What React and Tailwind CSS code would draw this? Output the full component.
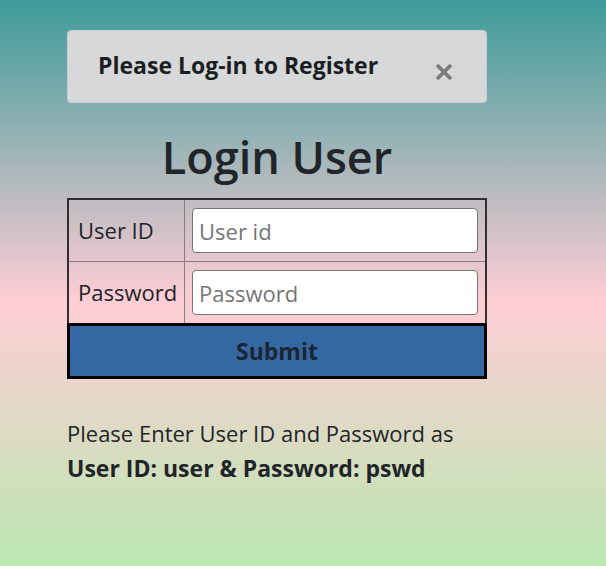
export default function App() {
  return (
    <div
      className="min-h-[566px] w-full bg-[linear-gradient(to_bottom,#3e9c9a_0%,#fecdd5_53%,#bbe8b1_100%)] text-[#212529]"
      style={{ fontFamily: '"Open Sans", "Noto Sans", sans-serif' }}
    >
      <div className="w-[420px] ml-[67px] pt-[30px]">
        <div className="relative h-[73px] rounded-[4px] border border-[#c8cacd] bg-[#d7d8da] flex items-center pl-[30px]">
          <span className="text-[23px] font-bold text-[#1b1e21] -mt-[2px]">Please Log-in to Register</span>
          <svg
            className="absolute left-[367px] top-[32px]"
            width="18"
            height="18"
            viewBox="0 0 18 18"
          >
            <path d="M2 2 L16 16 M16 2 L2 16" stroke="#7a7a7a" strokeWidth="3.6" strokeLinecap="butt" />
          </svg>
        </div>

        <h1 className="mt-[24px] text-center text-[45px] font-semibold leading-[60px]">Login User</h1>

        <div className="mt-[11px] border-2 border-[#303030]">
          <div className="flex h-[62px] border-b border-[#808080]">
            <div className="w-[116px] border-r border-[#808080] flex items-center pl-[9px] text-[22px]">User ID</div>
            <div className="flex-1 flex items-center px-[7px]">
              <input
                className="w-full h-[45px] rounded-[4px] border border-[#767676] bg-white px-[6px] text-[22px] placeholder:text-[#757575] outline-none"
                placeholder="User id"
              />
            </div>
          </div>
          <div className="flex h-[61px]">
            <div className="w-[116px] border-r border-[#808080] flex items-center pl-[9px] text-[22px]">Password</div>
            <div className="flex-1 flex items-center px-[7px]">
              <input
                className="w-full h-[45px] rounded-[4px] border border-[#767676] bg-white px-[6px] text-[22px] placeholder:text-[#757575] outline-none"
                placeholder="Password"
              />
            </div>
          </div>
        </div>
        <button className="-mt-[2px] block w-full h-[56px] border-[3px] border-black bg-[#3468a3] text-[23px] font-bold text-[#1c2532]">
          Submit
        </button>

        <div className="mt-[37px] text-[22px] leading-[35px]">
          <div>Please Enter User ID and Password as</div>
          <div className="font-bold text-[23px]">User ID: user &amp; Password: pswd</div>
        </div>
      </div>
    </div>
  );
}
